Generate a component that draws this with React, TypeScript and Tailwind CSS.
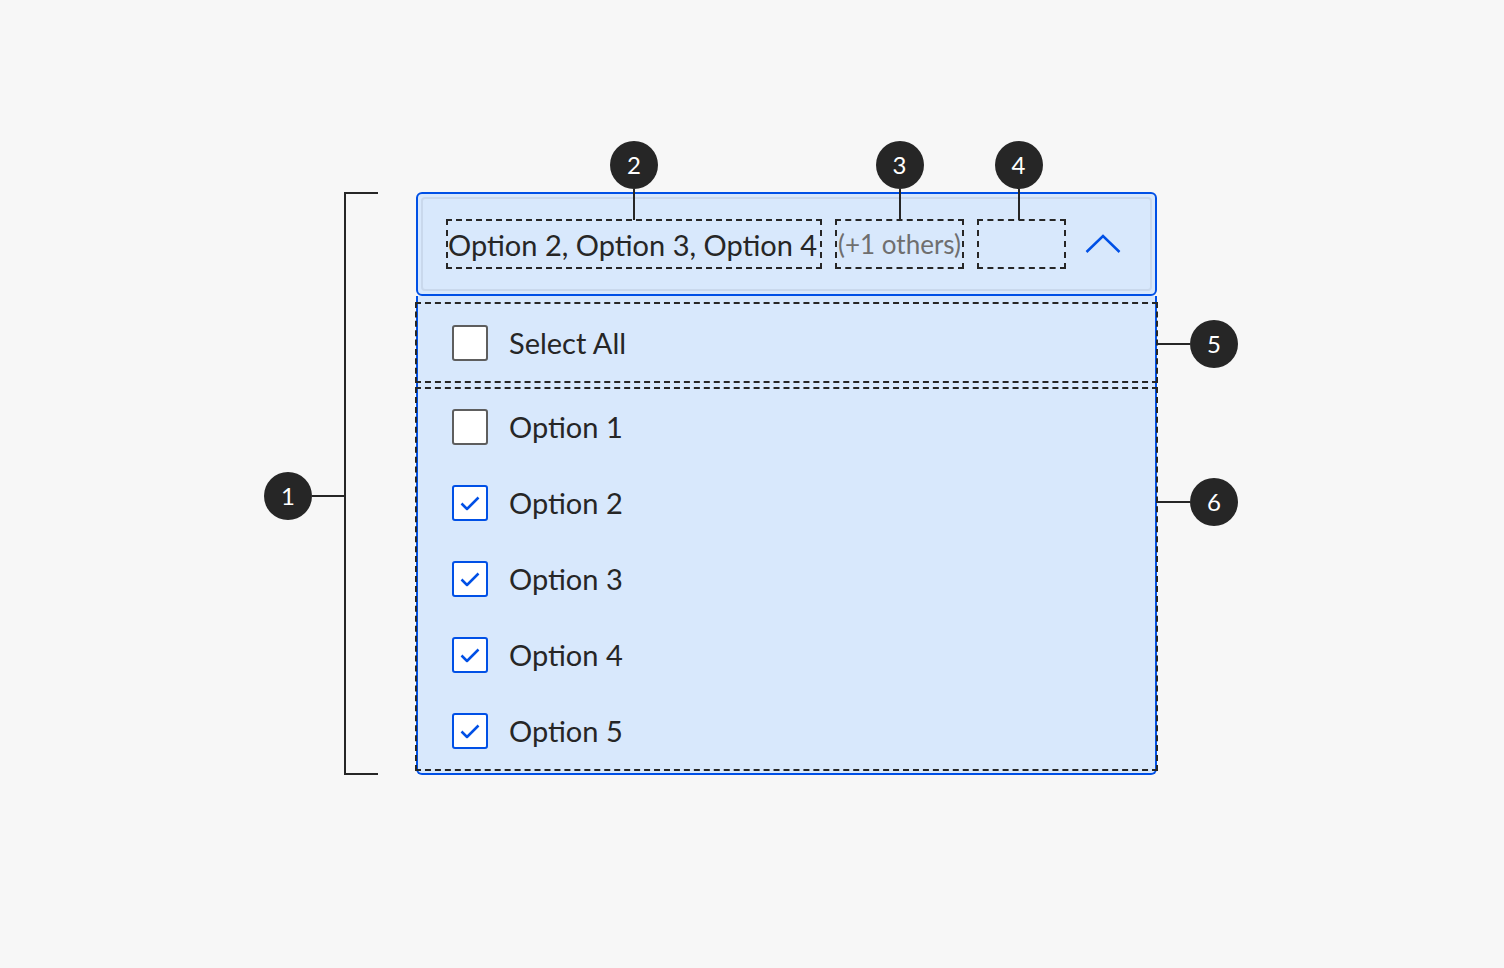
import React from 'react';

const font = { fontFamily: 'Lato, "Noto Sans", sans-serif' };

function Circle({ n }: { n: number }) {
  return (
    <div className="w-12 h-12 shrink-0 rounded-full bg-[#262626] text-white text-[24px] flex items-center justify-center">
      {n}
    </div>
  );
}

// callout sitting above a dashed box
function TopCallout({ n, shift = 0 }: { n: number; shift?: number }) {
  return (
    <div
      className="absolute bottom-full left-1/2 -translate-x-1/2 mb-[1px] flex flex-col items-center"
      style={{ marginLeft: shift }}
    >
      <Circle n={n} />
      <div className="w-[2px] h-[31px] bg-[#262626]" />
    </div>
  );
}

// callout to the right of a dashed box
function SideCallout({ n, top }: { n: number; top: number }) {
  return (
    <div className="absolute left-full flex items-center" style={{ top }}>
      <div className="w-[34px] h-[2px] bg-[#262626]" />
      <Circle n={n} />
    </div>
  );
}

function Checkbox({ checked }: { checked: boolean }) {
  return (
    <div
      className={`w-9 h-9 shrink-0 bg-white rounded-[3px] border-[2.5px] flex items-center justify-center ${
        checked ? 'border-[#0050e6]' : 'border-[#5e5e5e]'
      }`}
    >
      {checked && (
        <svg width="22" height="18" viewBox="0 0 22 18" fill="none">
          <polyline points="2.5,9.5 8,15 19.5,3.5" stroke="#0050e6" strokeWidth="2.5" strokeLinejoin="round" />
        </svg>
      )}
    </div>
  );
}

function Row({ label, checked }: { label: string; checked: boolean }) {
  return (
    <div className="h-[76px] flex items-center pl-[35px] gap-[21px]">
      <Checkbox checked={checked} />
      <span className="text-[29px] text-[#262626]">{label}</span>
    </div>
  );
}

export default function App() {
  const options = [
    { label: 'Option 1', checked: false },
    { label: 'Option 2', checked: true },
    { label: 'Option 3', checked: true },
    { label: 'Option 4', checked: true },
    { label: 'Option 5', checked: true },
  ];

  return (
    <div className="w-full h-[968px] bg-[#f7f7f7] overflow-hidden" style={font}>
      <div className="pt-[192px] pl-[264px] flex items-start">
        {/* Callout 1 with bracket */}
        <div className="flex items-center mt-[280px]">
          <Circle n={1} />
          <div className="w-[32px] h-[2px] bg-[#262626]" />
        </div>
        <div className="w-[34px] h-[583px] border-2 border-r-0 border-[#262626]" />

        <div className="ml-[38px] w-[741px]">
          {/* Trigger */}
          <div className="h-[104px] border-2 border-[#0050e6] rounded-md p-[3px] bg-[#d8e8fc]">
            <div className="h-full border-2 border-[#c9d8ec] rounded flex items-center pl-[23px]">
              <div className="relative w-[376px] h-[50px] border-2 border-dashed border-[#262626] flex items-center whitespace-nowrap">
                <TopCallout n={2} />
                <span className="text-[29px] text-[#262626] leading-none">Option 2, Option 3, Option 4</span>
              </div>
              <div className="relative ml-[13px] w-[129px] h-[50px] border-2 border-dashed border-[#262626] flex items-center justify-center whitespace-nowrap">
                <TopCallout n={3} />
                <span className="text-[26px] text-[#6f6f6f] leading-none">(+1 others)</span>
              </div>
              <div className="relative ml-[13px] w-[89px] h-[50px] border-2 border-dashed border-[#262626]">
                <TopCallout n={4} shift={-3} />
              </div>
              <svg className="ml-[19px]" width="36" height="20" viewBox="0 0 36 20" fill="none">
                <polyline points="1.5,18 18,2 34.5,18" stroke="#0050e6" strokeWidth="2.5" />
              </svg>
            </div>
          </div>

          {/* Menu */}
          <div className="border-2 border-t-0 border-[#0050e6] rounded-b-md bg-[#d8e8fc] pt-[6px] pb-[2px]">
            <div className="relative -mx-[3px] h-[81px] border-2 border-dashed border-[#262626] flex items-center pl-[35px] gap-[21px]">
              <Checkbox checked={false} />
              <span className="text-[29px] text-[#262626]">Select All</span>
              <SideCallout n={5} top={16} />
            </div>
            <div className="relative -mx-[3px] mt-[4px] border-2 border-dashed border-[#262626]">
              {options.map((o) => (
                <Row key={o.label} label={o.label} checked={o.checked} />
              ))}
              <SideCallout n={6} top={89} />
            </div>
          </div>
        </div>
      </div>
    </div>
  );
}
